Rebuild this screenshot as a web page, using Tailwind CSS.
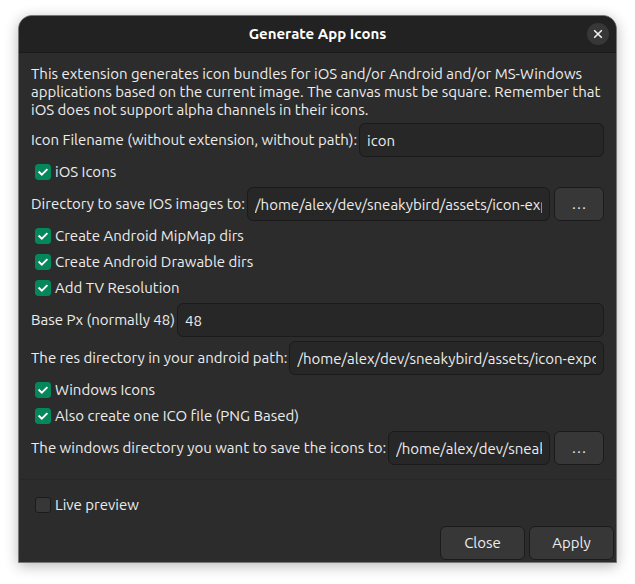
<!DOCTYPE html>
<html lang="en">
<head>
<meta charset="utf-8">
<meta name="viewport" content="width=device-width, initial-scale=1">
<title>Generate App Icons</title>
<script src="https://cdn.jsdelivr.net/npm/@tailwindcss/browser@4"></script>
</head>
<body class="min-h-screen bg-white px-[18px] pt-[15px] pb-[21px] font-['Ubuntu','Noto_Sans',sans-serif] text-[15px] leading-[18px] text-[#ededed]">
<main class="overflow-hidden rounded-t-[14px] border border-[#747876] bg-[#2c2c2c] shadow-[0_3px_14px_rgba(0,0,0,0.28)]">
  <header class="grid h-[37px] grid-cols-[1fr_auto_1fr] items-center border-b border-[#1a1a1a] bg-[#222222] px-[7px]">
    <h1 class="col-start-2 font-bold text-white">Generate App Icons</h1>
    <button type="button" aria-label="Close window" class="grid size-[22px] place-items-center justify-self-end rounded-full bg-[#373737]">
      <svg class="size-4" viewBox="0 0 16 16" fill="none" stroke="#f5f5f5" stroke-width="1.5"><path d="M4.2 4.2 11.8 11.8M11.8 4.2 4.2 11.8"/></svg>
    </button>
  </header>
  <form>
    <div class="flex flex-col gap-1 px-3 pt-3 pb-[14px]">
      <p>This extension generates icon bundles for iOS and/or Android and/or MS-Windows<br>applications based on the current image. The canvas must be square. Remember that<br>iOS does not support alpha channels in their icons.</p>
      <div class="flex items-center gap-[2px]">
        <label for="name" class="shrink-0">Icon Filename (without extension, without path):</label>
        <input id="name" type="text" value="icon" class="h-[34px] min-w-0 flex-1 rounded-md border border-[#1b1b1b] bg-[#272727] px-[7px]">
      </div>
      <label class="flex h-[22px] items-center gap-1 pl-1">
        <span class="grid size-4"><input type="checkbox" checked class="peer col-start-1 row-start-1 size-4 appearance-none rounded-[3px] border border-[#1b1b1b] bg-[#373737] checked:border-[#03875b] checked:bg-[#03875b]"><svg class="pointer-events-none invisible col-start-1 row-start-1 size-4 peer-checked:visible" viewBox="0 0 16 16" fill="none" stroke="#fff" stroke-width="1.9"><path d="M3.6 7.5 6.8 10.7 12.4 5.1"/></svg></span>
        iOS Icons
      </label>
      <div class="flex items-center gap-1">
        <div class="flex min-w-0 flex-1 items-center gap-[2px]">
          <label for="ios-dir" class="shrink-0">Directory to save IOS images to:</label>
          <input id="ios-dir" type="text" value="/home/alex/dev/sneakybird/assets/icon-exp" class="h-[34px] min-w-0 flex-1 rounded-md border border-[#1b1b1b] bg-[#272727] px-[7px]">
        </div>
        <button type="button" aria-label="Browse iOS directory" class="h-[34px] w-[50px] rounded-md border border-[#1b1b1b] bg-[#373737]">…</button>
      </div>
      <label class="flex h-[22px] items-center gap-1 pl-1">
        <span class="grid size-4"><input type="checkbox" checked class="peer col-start-1 row-start-1 size-4 appearance-none rounded-[3px] border border-[#1b1b1b] bg-[#373737] checked:border-[#03875b] checked:bg-[#03875b]"><svg class="pointer-events-none invisible col-start-1 row-start-1 size-4 peer-checked:visible" viewBox="0 0 16 16" fill="none" stroke="#fff" stroke-width="1.9"><path d="M3.6 7.5 6.8 10.7 12.4 5.1"/></svg></span>
        Create Android MipMap dirs
      </label>
      <label class="flex h-[22px] items-center gap-1 pl-1">
        <span class="grid size-4"><input type="checkbox" checked class="peer col-start-1 row-start-1 size-4 appearance-none rounded-[3px] border border-[#1b1b1b] bg-[#373737] checked:border-[#03875b] checked:bg-[#03875b]"><svg class="pointer-events-none invisible col-start-1 row-start-1 size-4 peer-checked:visible" viewBox="0 0 16 16" fill="none" stroke="#fff" stroke-width="1.9"><path d="M3.6 7.5 6.8 10.7 12.4 5.1"/></svg></span>
        Create Android Drawable dirs
      </label>
      <label class="flex h-[22px] items-center gap-1 pl-1">
        <span class="grid size-4"><input type="checkbox" checked class="peer col-start-1 row-start-1 size-4 appearance-none rounded-[3px] border border-[#1b1b1b] bg-[#373737] checked:border-[#03875b] checked:bg-[#03875b]"><svg class="pointer-events-none invisible col-start-1 row-start-1 size-4 peer-checked:visible" viewBox="0 0 16 16" fill="none" stroke="#fff" stroke-width="1.9"><path d="M3.6 7.5 6.8 10.7 12.4 5.1"/></svg></span>
        Add TV Resolution
      </label>
      <div class="flex items-center gap-[2px]">
        <label for="base" class="shrink-0">Base Px (normally 48)</label>
        <input id="base" type="text" value="48" class="h-[34px] min-w-0 flex-1 rounded-md border border-[#1b1b1b] bg-[#272727] px-[7px]">
      </div>
      <div class="flex items-center gap-[2px]">
        <label for="res" class="shrink-0">The res directory in your android path:</label>
        <input id="res" type="text" value="/home/alex/dev/sneakybird/assets/icon-expo" class="h-[34px] min-w-0 flex-1 rounded-md border border-[#1b1b1b] bg-[#272727] px-[7px]">
      </div>
      <label class="flex h-[22px] items-center gap-1 pl-1">
        <span class="grid size-4"><input type="checkbox" checked class="peer col-start-1 row-start-1 size-4 appearance-none rounded-[3px] border border-[#1b1b1b] bg-[#373737] checked:border-[#03875b] checked:bg-[#03875b]"><svg class="pointer-events-none invisible col-start-1 row-start-1 size-4 peer-checked:visible" viewBox="0 0 16 16" fill="none" stroke="#fff" stroke-width="1.9"><path d="M3.6 7.5 6.8 10.7 12.4 5.1"/></svg></span>
        Windows Icons
      </label>
      <label class="flex h-[22px] items-center gap-1 pl-1">
        <span class="grid size-4"><input type="checkbox" checked class="peer col-start-1 row-start-1 size-4 appearance-none rounded-[3px] border border-[#1b1b1b] bg-[#373737] checked:border-[#03875b] checked:bg-[#03875b]"><svg class="pointer-events-none invisible col-start-1 row-start-1 size-4 peer-checked:visible" viewBox="0 0 16 16" fill="none" stroke="#fff" stroke-width="1.9"><path d="M3.6 7.5 6.8 10.7 12.4 5.1"/></svg></span>
        Also create one ICO file (PNG Based)
      </label>
      <div class="flex items-center gap-1">
        <div class="flex min-w-0 flex-1 items-center gap-[2px]">
          <label for="win-dir" class="shrink-0">The windows directory you want to save the icons to:</label>
          <input id="win-dir" type="text" value="/home/alex/dev/sneaky" class="h-[34px] min-w-0 flex-1 rounded-md border border-[#1b1b1b] bg-[#272727] px-[7px]">
        </div>
        <button type="button" aria-label="Browse Windows directory" class="h-[34px] w-[50px] rounded-md border border-[#1b1b1b] bg-[#373737]">…</button>
      </div>
    </div>
    <div class="mx-[2px] border-t border-[#272727] px-[10px] pt-[14px]">
      <label class="flex h-[22px] items-center gap-1 pl-1">
        <input type="checkbox" class="size-4 appearance-none rounded-[3px] border border-[#1b1b1b] bg-[#373737]">
        Live preview
      </label>
    </div>
    <div class="flex justify-end gap-1 px-[2px] pt-[10px] pb-[2px]">
      <button type="button" class="h-[34px] w-[85px] rounded-md border border-[#1b1b1b] bg-[#373737]">Close</button>
      <button type="button" class="h-[34px] w-[85px] rounded-md border border-[#1b1b1b] bg-[#373737]">Apply</button>
    </div>
  </form>
</main>
</body>
</html>
